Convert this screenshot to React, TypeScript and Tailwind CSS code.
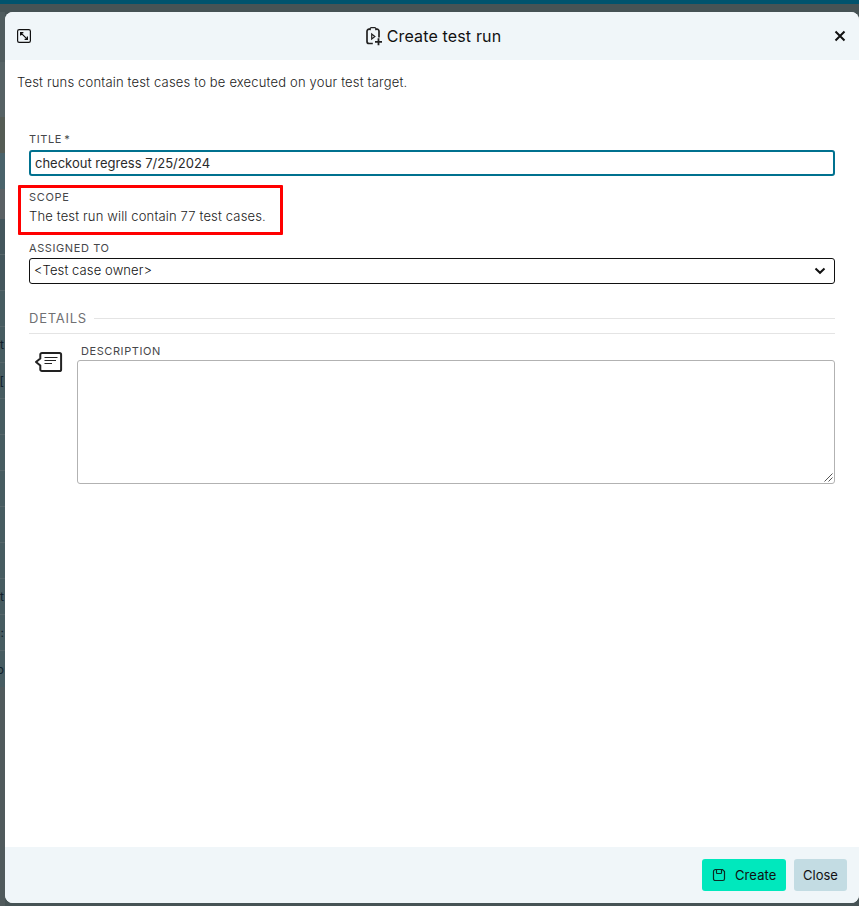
import React from "react";

type StripRow = { h: string; bg: string; text?: string; line?: boolean };

const strip: StripRow[] = [
  { h: "h-[50px]", bg: "bg-[#4f5c5e]" },
  { h: "h-[55px]", bg: "bg-[#566264]" },
  { h: "h-[36px]", bg: "bg-[#555c55]" },
  { h: "h-[36px]", bg: "bg-[#4a636a]" },
  { h: "h-[30px]", bg: "bg-[#5a6164]" },
  { h: "h-[36px]", bg: "bg-[#44565c]", line: true },
  { h: "h-[36px]", bg: "bg-[#44565c]", line: true },
  { h: "h-[36px]", bg: "bg-[#475c61]", line: true },
  { h: "h-[36px]", bg: "bg-[#475c61]", line: true, text: "t" },
  { h: "h-[36px]", bg: "bg-[#475c61]", line: true, text: "[" },
  { h: "h-[36px]", bg: "bg-[#475c61]", line: true },
  { h: "h-[36px]", bg: "bg-[#475c61]", line: true },
  { h: "h-[36px]", bg: "bg-[#475c61]", line: true },
  { h: "h-[36px]", bg: "bg-[#475c61]", line: true },
  { h: "h-[36px]", bg: "bg-[#475c61]", line: true },
  { h: "h-[36px]", bg: "bg-[#475c61]", line: true, text: "t" },
  { h: "h-[36px]", bg: "bg-[#475c61]", line: true, text: ":" },
  { h: "h-[36px]", bg: "bg-[#475c61]", text: "o" },
  { h: "h-[220px]", bg: "bg-[#505a5c]" },
];

function BackgroundStrip() {
  return (
    <div className="flex w-[5px] shrink-0 flex-col">
      {strip.map((r, i) => (
        <div
          key={i}
          className={`${r.h} ${r.bg} flex shrink-0 items-center justify-end whitespace-nowrap pr-px pt-px text-[12px] text-[#10202c] ${r.line ? "border-b border-[#56666a]" : ""}`}
        >
          {r.text}
        </div>
      ))}
    </div>
  );
}

function ExpandIcon() {
  return (
    <svg width="16" height="16" viewBox="0 0 16 16" fill="none" stroke="#111" strokeWidth="1.2">
      <rect x="1.6" y="1.6" width="12.8" height="12.8" rx="1.6" />
      <path d="M4.6 4.6l6.8 6.8M4.6 7.4V4.6h2.8M11.4 8.6v2.8H8.6" />
    </svg>
  );
}

function TestRunIcon() {
  return (
    <svg width="18" height="20" viewBox="0 0 18 20" fill="none" stroke="#222" strokeWidth="1.7">
      <path d="M7.800 17.500H4A2 2 0 0 1 2 15.500V5.200A2 2 0 0 1 4 3.200h1.200M10.800 3.200H12A2 2 0 0 1 14 5.200v6.300" />
      <path d="M5.200 4.300V2.600a1 1 0 0 1 1-1h3.600a1 1 0 0 1 1 1v1.700" strokeWidth="1.2" />
      <path d="M6.700 8v5l3.200-2.500z" strokeWidth="1.2" />
      <path d="M13.500 12.300v7M10 15.800h7" strokeWidth="1.800" />
    </svg>
  );
}

function DescriptionIcon() {
  return (
    <svg width="30" height="24" viewBox="0 0 30 24" fill="none" stroke="#222">
      <path d="M8 2.900h17.500A1.700 1.700 0 0 1 27.100 4.600v14.800a1.700 1.700 0 0 1-1.700 1.700H8A1.700 1.700 0 0 1 6.300 19.400v-3.800L2 12l4.300-3.600V4.600A1.700 1.700 0 0 1 8 2.900z" strokeWidth="2" strokeLinejoin="round" />
      <path d="M10.500 7.500h13M10.500 10.500h11.500M10.500 13.500h7.500" strokeWidth="1.100" />
    </svg>
  );
}

function SaveIcon() {
  return (
    <svg width="14" height="14" viewBox="0 0 14 14" fill="none" stroke="#0b2b25" strokeWidth="1.2">
      <path d="M3.500 1.500h7l2 2v7.200a1.800 1.800 0 0 1-1.800 1.800H3.300a1.800 1.800 0 0 1-1.800-1.800V3.500a2 2 0 0 1 2-2z" />
      <path d="M4.500 1.500V4.700a.8.8 0 0 0 .8.8h3.400a.8.8 0 0 0 .8-.8V1.500" />
    </svg>
  );
}

export default function App() {
  return (
    <div className="flex h-[906px] w-[859px] flex-col overflow-hidden bg-[#465355] font-['Inter',sans-serif] text-[13px] text-[#46474a]">
      <div className="h-1 shrink-0 bg-[#00536d]" />
      <div className="h-2 shrink-0" />
      <div className="flex h-[891px] shrink-0">
        <BackgroundStrip />
        <section className="flex w-[854px] flex-col overflow-hidden rounded-[8px] bg-white">
          <header className="flex h-12 shrink-0 items-center justify-between bg-[#f0f6f9] pl-[11px] pr-[13px]">
            <ExpandIcon />
            <div className="flex items-center gap-[4px]">
              <TestRunIcon />
              <h1 className="text-[16px] leading-6 tracking-[0.15px] text-[#111]">Create test run</h1>
            </div>
            <svg width="12" height="12" viewBox="0 0 12 12" stroke="#111" strokeWidth="2">
              <path d="M1.500 1.500l9 9M10.500 1.500l-9 9" />
            </svg>
          </header>

          <main className="flex grow flex-col">
            <p className="mt-[12px] pl-3 font-light leading-5 tracking-[0.175px] text-[#222]">
              Test runs contain test cases to be executed on your test target.
            </p>
            <div className="mt-[39px] flex flex-col pl-6 pr-6">
              <label className="h-4 text-[11px] leading-4 tracking-[0.58px] [word-spacing:-1.2px]">TITLE *</label>
              <div className="mt-[3px] flex h-[26px] items-center rounded-[3px] border-2 border-[#00718f] pl-1 pt-px text-[#2a2a2a]">
                checkout regress 7/25/2024
              </div>
              <div className="-ml-[11px] mt-[9px] h-[50px] w-[265px] rounded-[1px] border-[3px] border-[#ff0000] pl-2">
                <div className="mt-[1px] h-4 text-[11px] leading-4 tracking-[0.65px]">SCOPE</div>
                <div className="mt-[1px] font-light leading-5 tracking-[0.15px] text-[#222]">The test run will contain 77 test cases.</div>
              </div>
              <label className="mt-[5px] h-4 text-[11px] leading-4 tracking-[0.6px]">ASSIGNED TO</label>
              <div className="mt-[2px] flex h-[26px] items-center justify-between rounded-[3px] border border-[#111] pl-[4px] pr-[8px] text-[#111]">
                <span className="font-light tracking-[0.1px]">&lt;Test case owner&gt;</span>
                <svg width="12" height="8" viewBox="0 0 12 8" fill="none" stroke="#111" strokeWidth="2">
                  <path d="M1.500 1.500L6 5.800l4.500-4.300" />
                </svg>
              </div>
              <div className="mt-[26px] flex h-4 items-center gap-[7px] text-[#6f7073]">
                <h2 className="tracking-[0.75px] leading-4">DETAILS</h2>
                <div className="h-px grow bg-[#e4e4e4]" />
              </div>
              <div className="mt-[7px] h-px bg-[#e4e4e4]" />
              <div className="mt-[9px] flex">
                <div className="w-12 pl-[5px] pt-[7px]">
                  <DescriptionIcon />
                </div>
                <div className="flex grow flex-col">
                  <label className="h-4 pl-1 text-[11px] leading-4 tracking-[0.58px]">DESCRIPTION</label>
                  <div className="mt-[1px] flex h-[124px] items-end justify-end rounded-[3px] border border-[#b2b2b2] p-[1px]">
                    <svg width="9" height="9" viewBox="0 0 9 9" stroke="#555" strokeWidth="1">
                      <path d="M0.500 8.500l8-8M4.500 8.500l4-4" />
                    </svg>
                  </div>
                </div>
              </div>
            </div>
          </main>

          <footer className="flex h-14 shrink-0 items-center justify-end gap-2 bg-[#f0f6f9] pr-3 text-[#111]">
            <button className="flex h-8 w-[84px] items-center gap-[9px] rounded-[3px] bg-[#00e8bd] pl-[10px]">
              <SaveIcon />
              <span className="pt-[2px] tracking-[0.1px]">Create</span>
            </button>
            <button className="h-8 w-[53px] rounded-[3px] bg-[#c3dce3] pt-[2px]">Close</button>
          </footer>
        </section>
      </div>
    </div>
  );
}
